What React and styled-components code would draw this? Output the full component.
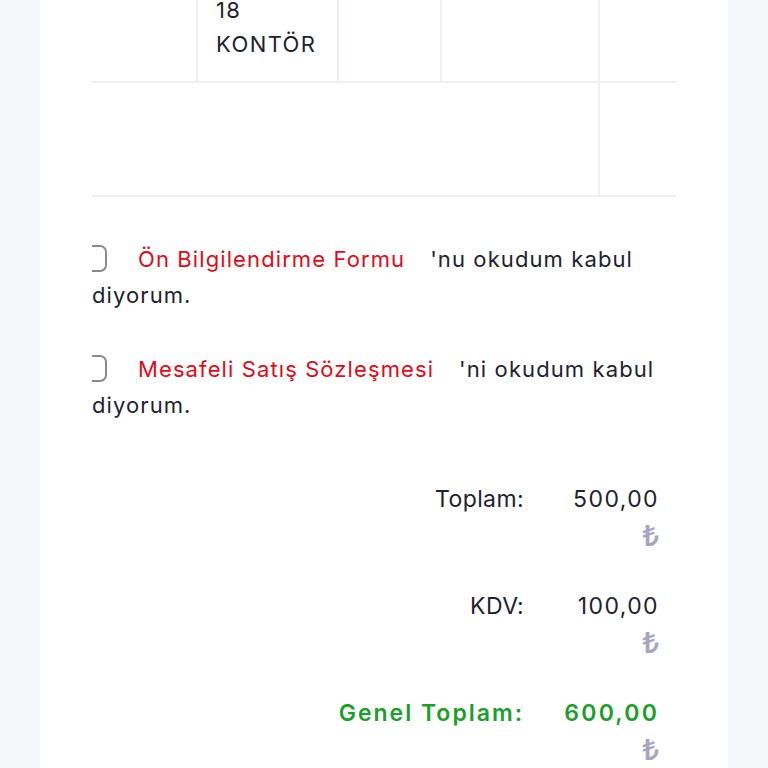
import React from "react"
import styled, { createGlobalStyle } from "styled-components"

const GlobalStyle = createGlobalStyle`
    body{
        margin: 0;
        background-color: #f4f7fa;
        font-family: "Inter", "Noto Sans", sans-serif;
        color: #1f2230;
        overflow: hidden;
    }
`

const App =()=>{
    return(
        <>
            <GlobalStyle/>
            <Page>
                <Card>
                    <ScrollArea>
                        <Inner>
                            <Table>
                                <colgroup>
                                    <col style={{width: 119}}/>
                                    <col style={{width: 141}}/>
                                    <col style={{width: 103}}/>
                                    <col style={{width: 158}}/>
                                    <col style={{width: 140}}/>
                                </colgroup>
                                <tbody>
                                    <TopRow>
                                        <Cell></Cell>
                                        <Cell>18 KONTÖR</Cell>
                                        <Cell></Cell>
                                        <Cell></Cell>
                                        <Cell></Cell>
                                    </TopRow>
                                    <BottomRow>
                                        <Cell colSpan={4}></Cell>
                                        <Cell></Cell>
                                    </BottomRow>
                                </tbody>
                            </Table>

                            <Agreements>
                                <Agreement>
                                    <Check type="checkbox"/>
                                    <DocLink>Ön Bilgilendirme Formu</DocLink>'nu okudum kabul ediyorum.
                                </Agreement>
                                <Agreement>
                                    <Check type="checkbox"/>
                                    <DocLink>Mesafeli Satış Sözleşmesi</DocLink>'ni okudum kabul ediyorum.
                                </Agreement>
                            </Agreements>

                            <Totals>
                                <Label>Toplam:</Label>
                                <Amount>500,00<Lira>₺</Lira></Amount>
                                <Label>KDV:</Label>
                                <Amount>100,00<Lira>₺</Lira></Amount>
                                <Label $grand>Genel Toplam:</Label>
                                <Amount $grand>600,00<Lira>₺</Lira></Amount>
                            </Totals>
                        </Inner>
                    </ScrollArea>
                </Card>
            </Page>
        </>
    )
}
export default App

const Page = styled.div`
    width: 100%;
    min-height: 100vh;
    padding: 0 40px;
    box-sizing: border-box;
`
const Card = styled.div`
    background-color: #ffffff;
    min-height: calc(100vh + 40px);
    margin-top: -40px;
    padding: 0 52px;
    box-sizing: border-box;
`
const ScrollArea = styled.div`
    overflow: hidden;
    width: 100%;
`
const Inner = styled.div`
    margin-left: -14px;
    width: 602px;
`
const Table = styled.table`
    border-collapse: collapse;
    table-layout: fixed;
    width: 661px;
    font-size: 22px;
    letter-spacing: 1.4px;
    line-height: 34px;
`
const Cell = styled.td`
    border-right: 2px solid #eef0f3;
    border-bottom: 2px solid #eef0f3;
    padding: 33px 18px 0;
    vertical-align: top;
    box-sizing: border-box;
`
const TopRow = styled.tr`
    height: 122px;
`
const BottomRow = styled.tr`
    height: 114px;
`
const Agreements = styled.div`
    margin-top: 44px;
`
const Agreement = styled.p`
    margin: 0 0 38px;
    font-size: 22px;
    letter-spacing: 1.1px;
    line-height: 36px;
`
const Check = styled.input`
    appearance: none;
    display: inline-block;
    width: 26px;
    height: 27px;
    margin: 0 31px 0 3px;
    border: 2.5px solid #8a8a8a;
    border-radius: 7px;
    vertical-align: -5px;
    box-sizing: border-box;
`
const DocLink = styled.span`
    color: #e30a17;
    margin-right: 25px;
    cursor: pointer;
`
const Totals = styled.div`
    margin-top: 58px;
    display: grid;
    grid-template-columns: auto 100px;
    justify-content: end;
    column-gap: 35px;
    row-gap: 35px;
    padding-right: 21px;
    font-size: 23px;
    line-height: 36px;
`
const Label = styled.div`
    text-align: right;
    color: ${p => p.$grand ? "#1a9f2b" : "#1f2230"};
    font-weight: ${p => p.$grand ? 600 : 400};
    letter-spacing: ${p => p.$grand ? "2px" : "0.4px"};
`
const Amount = styled.div`
    text-align: right;
    color: ${p => p.$grand ? "#1a9f2b" : "#1f2230"};
    font-weight: ${p => p.$grand ? 600 : 400};
    letter-spacing: ${p => p.$grand ? "2.2px" : "1.4px"};
`
const Lira = styled.span`
    display: block;
    color: #a6a5c3;
    font-family: "Noto Sans", sans-serif;
    font-weight: 600;
    font-size: 29px;
    letter-spacing: 0;
`
